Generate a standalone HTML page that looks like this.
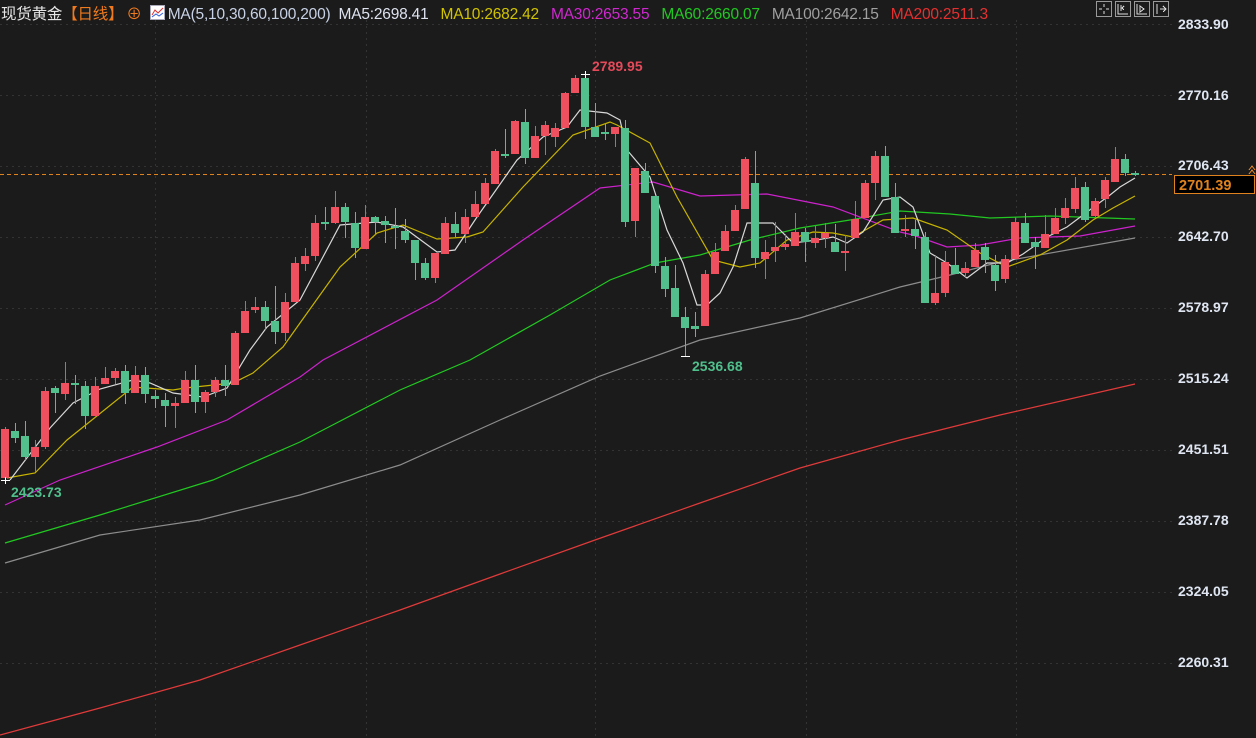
<!DOCTYPE html>
<html><head><meta charset="utf-8">
<style>
html,body{margin:0;padding:0;background:#1b1b1b;}
body{width:1256px;height:738px;overflow:hidden;position:relative;font-family:"Liberation Sans","Noto Sans CJK SC",sans-serif;}
svg{position:absolute;left:0;top:0}
.hd{position:absolute;left:1px;top:2px;font-size:15.5px;white-space:nowrap;color:#d8dce6;letter-spacing:-0.2px}
.hd span{margin-right:8px}
.ax{position:absolute;left:1178px;font-size:14px;color:#dfe6f2;font-weight:bold}
</style></head><body>
<svg width="1256" height="738" xmlns="http://www.w3.org/2000/svg">
<g stroke="#333" stroke-dasharray="2,4" stroke-width="1">
<line x1="0" y1="24.5" x2="1172" y2="24.5"/><line x1="0" y1="95.5" x2="1172" y2="95.5"/><line x1="0" y1="166.5" x2="1172" y2="166.5"/><line x1="0" y1="237.5" x2="1172" y2="237.5"/><line x1="0" y1="308.5" x2="1172" y2="308.5"/><line x1="0" y1="379.5" x2="1172" y2="379.5"/><line x1="0" y1="450.5" x2="1172" y2="450.5"/><line x1="0" y1="521.5" x2="1172" y2="521.5"/><line x1="0" y1="592.5" x2="1172" y2="592.5"/><line x1="0" y1="663.5" x2="1172" y2="663.5"/>
<line x1="155.5" y1="20" x2="155.5" y2="738"/><line x1="366.5" y1="20" x2="366.5" y2="738"/><line x1="595.5" y1="20" x2="595.5" y2="738"/><line x1="806.5" y1="20" x2="806.5" y2="738"/><line x1="1016.5" y1="20" x2="1016.5" y2="738"/>
</g>
<line x1="0" y1="174.5" x2="1172" y2="174.5" stroke="#e0821e" stroke-dasharray="4,3" stroke-width="1"/>
<g fill="none" stroke-width="1.2">
<polyline stroke="#e03a3a" points="0,735 100,708 200,680 300,645 400,610 500,574 595,540 700,503 800,468 900,440 1000,415 1135,384"/>
<polyline stroke="#8c8c8c" points="5,563 100,535 200,520 300,495 400,465 500,420 600,376 700,340 800,318 900,287 950,275 1000,262 1135,238"/>
<polyline stroke="#22c822" points="5,543 100,515 213,480 300,442 400,390 470,360 550,315 610,280 655,263 700,255 750,240 800,228 850,220 900,211 950,214 990,218 1050,216 1135,219"/>
<polyline stroke="#cc22cc" points="5,505 60,480 157,447 227,420 300,377 323,360 437,300 523,240 600,188 653,182 700,196 767,194 833,207 900,232 913,235 947,247 980,245 1020,238 1080,236 1135,226"/>
<polyline stroke="#c8b400" points="7,478 35,473 67,440 133,387 173,390 185,388 233,383 253,373 283,347 300,323 340,267 377,233 403,225 437,239 467,237 483,232 523,187 573,135 610,122 617,125 650,143 677,197 713,260 740,267 760,263 787,240 813,232 833,233 853,237 883,220 913,218 947,230 980,253 1007,267 1040,255 1067,240 1093,220 1113,208 1135,196"/>
<polyline stroke="#d8d8d8" points="10,480 33,450 50,428 73,403 100,389 133,380 150,383 173,393 203,397 227,388 250,350 267,327 300,300 340,225 377,222 403,227 437,252 455,250 477,217 503,180 517,160 543,137 567,127 580,110 607,113 620,120 627,150 650,177 667,230 683,263 697,305 707,305 720,293 733,267 747,223 773,223 793,243 817,240 833,237 847,243 863,232 883,200 900,197 913,207 930,253 947,263 967,278 987,263 1007,263 1023,254 1047,237 1067,227 1087,212 1110,195 1120,187 1135,178"/>
</g>
<g shape-rendering="crispEdges">
<g stroke="#ef5060" fill="#ef5060" stroke-width="1">
<line x1="5.5" y1="427" x2="5.5" y2="480"/><rect x="1" y="429" width="8" height="49" stroke="none"/>
<line x1="35.5" y1="440" x2="35.5" y2="472"/><rect x="31" y="447" width="8" height="10" stroke="none"/>
<line x1="45.5" y1="387" x2="45.5" y2="449"/><rect x="41" y="391" width="8" height="56" stroke="none"/>
<line x1="65.5" y1="362" x2="65.5" y2="400"/><rect x="61" y="383" width="8" height="11" stroke="none"/>
<line x1="95.5" y1="377" x2="95.5" y2="416"/><rect x="91" y="386" width="8" height="30" stroke="none"/>
<line x1="105.5" y1="367" x2="105.5" y2="384"/><rect x="101" y="378" width="8" height="6" stroke="none"/>
<line x1="115.5" y1="368" x2="115.5" y2="384"/><rect x="111" y="371" width="8" height="7" stroke="none"/>
<line x1="135.5" y1="366" x2="135.5" y2="393"/><rect x="131" y="375" width="8" height="18" stroke="none"/>
<line x1="175.5" y1="397" x2="175.5" y2="428"/><rect x="171" y="403" width="8" height="3" stroke="none"/>
<line x1="185.5" y1="371" x2="185.5" y2="403"/><rect x="181" y="380" width="8" height="23" stroke="none"/>
<line x1="205.5" y1="390" x2="205.5" y2="413"/><rect x="201" y="392" width="8" height="10" stroke="none"/>
<line x1="215.5" y1="377" x2="215.5" y2="397"/><rect x="211" y="380" width="8" height="12" stroke="none"/>
<line x1="235.5" y1="331" x2="235.5" y2="385"/><rect x="231" y="333" width="8" height="52" stroke="none"/>
<line x1="245.5" y1="301" x2="245.5" y2="333"/><rect x="241" y="311" width="8" height="22" stroke="none"/>
<line x1="255.5" y1="297" x2="255.5" y2="313"/><rect x="251" y="307" width="8" height="3" stroke="none"/>
<line x1="285.5" y1="293" x2="285.5" y2="341"/><rect x="281" y="302" width="8" height="31" stroke="none"/>
<line x1="295.5" y1="257" x2="295.5" y2="302"/><rect x="291" y="263" width="8" height="39" stroke="none"/>
<line x1="305.5" y1="248" x2="305.5" y2="271"/><rect x="301" y="256" width="8" height="8" stroke="none"/>
<line x1="315.5" y1="215" x2="315.5" y2="261"/><rect x="311" y="223" width="8" height="33" stroke="none"/>
<line x1="335.5" y1="191" x2="335.5" y2="224"/><rect x="331" y="207" width="8" height="16" stroke="none"/>
<line x1="365.5" y1="205" x2="365.5" y2="249"/><rect x="361" y="217" width="8" height="32" stroke="none"/>
<line x1="435.5" y1="253" x2="435.5" y2="283"/><rect x="431" y="253" width="8" height="25" stroke="none"/>
<line x1="445.5" y1="217" x2="445.5" y2="254"/><rect x="441" y="223" width="8" height="31" stroke="none"/>
<line x1="465.5" y1="209" x2="465.5" y2="243"/><rect x="461" y="217" width="8" height="17" stroke="none"/>
<line x1="475.5" y1="191" x2="475.5" y2="217"/><rect x="471" y="204" width="8" height="13" stroke="none"/>
<line x1="485.5" y1="178" x2="485.5" y2="204"/><rect x="481" y="183" width="8" height="21" stroke="none"/>
<line x1="495.5" y1="149" x2="495.5" y2="184"/><rect x="491" y="151" width="8" height="33" stroke="none"/>
<line x1="515.5" y1="120" x2="515.5" y2="154"/><rect x="511" y="121" width="8" height="33" stroke="none"/>
<line x1="535.5" y1="126" x2="535.5" y2="158"/><rect x="531" y="136" width="8" height="22" stroke="none"/>
<line x1="545.5" y1="121" x2="545.5" y2="155"/><rect x="541" y="125" width="8" height="11" stroke="none"/>
<line x1="555.5" y1="123" x2="555.5" y2="147"/><rect x="551" y="128" width="8" height="9" stroke="none"/>
<line x1="565.5" y1="92" x2="565.5" y2="128"/><rect x="561" y="93" width="8" height="35" stroke="none"/>
<line x1="575.5" y1="75" x2="575.5" y2="93"/><rect x="571" y="78" width="8" height="15" stroke="none"/>
<line x1="615.5" y1="127" x2="615.5" y2="147"/><rect x="611" y="127" width="8" height="7" stroke="none"/>
<line x1="635.5" y1="168" x2="635.5" y2="237"/><rect x="631" y="168" width="8" height="53" stroke="none"/>
<line x1="705.5" y1="270" x2="705.5" y2="326"/><rect x="701" y="274" width="8" height="52" stroke="none"/>
<line x1="715.5" y1="243" x2="715.5" y2="274"/><rect x="711" y="252" width="8" height="22" stroke="none"/>
<line x1="725.5" y1="225" x2="725.5" y2="251"/><rect x="721" y="231" width="8" height="20" stroke="none"/>
<line x1="735.5" y1="205" x2="735.5" y2="231"/><rect x="731" y="210" width="8" height="21" stroke="none"/>
<line x1="745.5" y1="157" x2="745.5" y2="209"/><rect x="741" y="159" width="8" height="50" stroke="none"/>
<line x1="765.5" y1="240" x2="765.5" y2="279"/><rect x="761" y="252" width="8" height="7" stroke="none"/>
<line x1="775.5" y1="222" x2="775.5" y2="262"/><rect x="771" y="247" width="8" height="4" stroke="none"/>
<line x1="785.5" y1="234" x2="785.5" y2="250"/><rect x="781" y="244" width="8" height="3" stroke="none"/>
<line x1="795.5" y1="213" x2="795.5" y2="246"/><rect x="791" y="232" width="8" height="14" stroke="none"/>
<line x1="815.5" y1="225" x2="815.5" y2="248"/><rect x="811" y="238" width="8" height="5" stroke="none"/>
<line x1="825.5" y1="223" x2="825.5" y2="248"/><rect x="821" y="233" width="8" height="5" stroke="none"/>
<line x1="845.5" y1="235" x2="845.5" y2="271"/><rect x="841" y="251" width="8" height="2" stroke="none"/>
<line x1="855.5" y1="201" x2="855.5" y2="238"/><rect x="851" y="219" width="8" height="19" stroke="none"/>
<line x1="865.5" y1="180" x2="865.5" y2="218"/><rect x="861" y="183" width="8" height="35" stroke="none"/>
<line x1="875.5" y1="151" x2="875.5" y2="200"/><rect x="871" y="156" width="8" height="27" stroke="none"/>
<line x1="905.5" y1="215" x2="905.5" y2="237"/><rect x="901" y="229" width="8" height="2" stroke="none"/>
<line x1="935.5" y1="255" x2="935.5" y2="305"/><rect x="931" y="293" width="8" height="10" stroke="none"/>
<line x1="945.5" y1="251" x2="945.5" y2="297"/><rect x="941" y="262" width="8" height="31" stroke="none"/>
<line x1="965.5" y1="262" x2="965.5" y2="277"/><rect x="961" y="268" width="8" height="5" stroke="none"/>
<line x1="975.5" y1="243" x2="975.5" y2="267"/><rect x="971" y="250" width="8" height="17" stroke="none"/>
<line x1="1005.5" y1="255" x2="1005.5" y2="283"/><rect x="1001" y="259" width="8" height="20" stroke="none"/>
<line x1="1015.5" y1="217" x2="1015.5" y2="259"/><rect x="1011" y="222" width="8" height="37" stroke="none"/>
<line x1="1045.5" y1="215" x2="1045.5" y2="248"/><rect x="1041" y="234" width="8" height="14" stroke="none"/>
<line x1="1055.5" y1="208" x2="1055.5" y2="234"/><rect x="1051" y="218" width="8" height="16" stroke="none"/>
<line x1="1065.5" y1="198" x2="1065.5" y2="224"/><rect x="1061" y="208" width="8" height="10" stroke="none"/>
<line x1="1075.5" y1="177" x2="1075.5" y2="213"/><rect x="1071" y="188" width="8" height="21" stroke="none"/>
<line x1="1095.5" y1="198" x2="1095.5" y2="218"/><rect x="1091" y="201" width="8" height="15" stroke="none"/>
<line x1="1105.5" y1="177" x2="1105.5" y2="208"/><rect x="1101" y="180" width="8" height="19" stroke="none"/>
<line x1="1115.5" y1="147" x2="1115.5" y2="182"/><rect x="1111" y="159" width="8" height="23" stroke="none"/>
</g>
<g stroke="#52bf8c" fill="#52bf8c" stroke-width="1">
<line x1="15.5" y1="423" x2="15.5" y2="443"/><rect x="11" y="431" width="8" height="7" stroke="none"/>
<line x1="25.5" y1="421" x2="25.5" y2="460"/><rect x="21" y="436" width="8" height="21" stroke="none"/>
<line x1="55.5" y1="386" x2="55.5" y2="413"/><rect x="51" y="388" width="8" height="5" stroke="none"/>
<line x1="75.5" y1="375" x2="75.5" y2="404"/><rect x="71" y="383" width="8" height="2" stroke="none"/>
<line x1="85.5" y1="381" x2="85.5" y2="429"/><rect x="81" y="386" width="8" height="30" stroke="none"/>
<line x1="125.5" y1="365" x2="125.5" y2="404"/><rect x="121" y="371" width="8" height="22" stroke="none"/>
<line x1="145.5" y1="367" x2="145.5" y2="403"/><rect x="141" y="375" width="8" height="19" stroke="none"/>
<line x1="155.5" y1="390" x2="155.5" y2="408"/><rect x="151" y="396" width="8" height="3" stroke="none"/>
<line x1="165.5" y1="393" x2="165.5" y2="427"/><rect x="161" y="400" width="8" height="6" stroke="none"/>
<line x1="195.5" y1="365" x2="195.5" y2="413"/><rect x="191" y="380" width="8" height="22" stroke="none"/>
<line x1="225.5" y1="365" x2="225.5" y2="396"/><rect x="221" y="380" width="8" height="6" stroke="none"/>
<line x1="265.5" y1="301" x2="265.5" y2="330"/><rect x="261" y="307" width="8" height="14" stroke="none"/>
<line x1="275.5" y1="286" x2="275.5" y2="344"/><rect x="271" y="321" width="8" height="11" stroke="none"/>
<line x1="325.5" y1="207" x2="325.5" y2="230"/><rect x="321" y="222" width="8" height="2" stroke="none"/>
<line x1="345.5" y1="203" x2="345.5" y2="238"/><rect x="341" y="207" width="8" height="15" stroke="none"/>
<line x1="355.5" y1="212" x2="355.5" y2="258"/><rect x="351" y="223" width="8" height="25" stroke="none"/>
<line x1="375.5" y1="216" x2="375.5" y2="235"/><rect x="371" y="217" width="8" height="5" stroke="none"/>
<line x1="385.5" y1="216" x2="385.5" y2="243"/><rect x="381" y="221" width="8" height="4" stroke="none"/>
<line x1="395.5" y1="208" x2="395.5" y2="249"/><rect x="391" y="226" width="8" height="2" stroke="none"/>
<line x1="405.5" y1="219" x2="405.5" y2="243"/><rect x="401" y="231" width="8" height="9" stroke="none"/>
<line x1="415.5" y1="240" x2="415.5" y2="280"/><rect x="411" y="240" width="8" height="23" stroke="none"/>
<line x1="425.5" y1="258" x2="425.5" y2="280"/><rect x="421" y="263" width="8" height="15" stroke="none"/>
<line x1="455.5" y1="212" x2="455.5" y2="237"/><rect x="451" y="224" width="8" height="9" stroke="none"/>
<line x1="505.5" y1="129" x2="505.5" y2="158"/><rect x="501" y="154" width="8" height="2" stroke="none"/>
<line x1="525.5" y1="109" x2="525.5" y2="164"/><rect x="521" y="122" width="8" height="36" stroke="none"/>
<line x1="585.5" y1="74" x2="585.5" y2="139"/><rect x="581" y="78" width="8" height="49" stroke="none"/>
<line x1="595.5" y1="103" x2="595.5" y2="137"/><rect x="591" y="127" width="8" height="10" stroke="none"/>
<line x1="605.5" y1="123" x2="605.5" y2="140"/><rect x="601" y="132" width="8" height="2" stroke="none"/>
<line x1="625.5" y1="120" x2="625.5" y2="227"/><rect x="621" y="128" width="8" height="94" stroke="none"/>
<line x1="645.5" y1="163" x2="645.5" y2="193"/><rect x="641" y="171" width="8" height="22" stroke="none"/>
<line x1="655.5" y1="196" x2="655.5" y2="273"/><rect x="651" y="196" width="8" height="70" stroke="none"/>
<line x1="665.5" y1="257" x2="665.5" y2="297"/><rect x="661" y="266" width="8" height="23" stroke="none"/>
<line x1="675.5" y1="265" x2="675.5" y2="317"/><rect x="671" y="288" width="8" height="29" stroke="none"/>
<line x1="685.5" y1="307" x2="685.5" y2="357"/><rect x="681" y="317" width="8" height="11" stroke="none"/>
<line x1="695.5" y1="312" x2="695.5" y2="337"/><rect x="691" y="326" width="8" height="3" stroke="none"/>
<line x1="755.5" y1="151" x2="755.5" y2="268"/><rect x="751" y="183" width="8" height="75" stroke="none"/>
<line x1="805.5" y1="228" x2="805.5" y2="262"/><rect x="801" y="232" width="8" height="10" stroke="none"/>
<line x1="835.5" y1="224" x2="835.5" y2="252"/><rect x="831" y="242" width="8" height="10" stroke="none"/>
<line x1="885.5" y1="146" x2="885.5" y2="197"/><rect x="881" y="156" width="8" height="41" stroke="none"/>
<line x1="895.5" y1="183" x2="895.5" y2="233"/><rect x="891" y="197" width="8" height="36" stroke="none"/>
<line x1="915.5" y1="220" x2="915.5" y2="249"/><rect x="911" y="229" width="8" height="7" stroke="none"/>
<line x1="925.5" y1="232" x2="925.5" y2="303"/><rect x="921" y="237" width="8" height="66" stroke="none"/>
<line x1="955.5" y1="248" x2="955.5" y2="274"/><rect x="951" y="265" width="8" height="9" stroke="none"/>
<line x1="985.5" y1="243" x2="985.5" y2="273"/><rect x="981" y="247" width="8" height="13" stroke="none"/>
<line x1="995.5" y1="255" x2="995.5" y2="291"/><rect x="991" y="265" width="8" height="16" stroke="none"/>
<line x1="1025.5" y1="213" x2="1025.5" y2="243"/><rect x="1021" y="223" width="8" height="20" stroke="none"/>
<line x1="1035.5" y1="237" x2="1035.5" y2="269"/><rect x="1031" y="242" width="8" height="5" stroke="none"/>
<line x1="1085.5" y1="182" x2="1085.5" y2="222"/><rect x="1081" y="187" width="8" height="33" stroke="none"/>
<line x1="1125.5" y1="154" x2="1125.5" y2="176"/><rect x="1121" y="159" width="8" height="14" stroke="none"/>
<line x1="1135.5" y1="171" x2="1135.5" y2="176"/><rect x="1131" y="173" width="8" height="2" stroke="none"/>
</g>
<g stroke="#ffffff" stroke-width="1">
<line x1="581" y1="74.5" x2="590" y2="74.5"/><line x1="585.5" y1="71" x2="585.5" y2="78"/>
<line x1="681" y1="356.5" x2="690" y2="356.5"/>
<line x1="1" y1="480.5" x2="10" y2="480.5"/><line x1="5.5" y1="477" x2="5.5" y2="484"/>
</g>
<rect x="1174.5" y="175.5" width="80" height="18" fill="#000" stroke="#e0821e"/>
<g stroke="#9a9a9a" fill="none">
<rect x="1096.5" y="1.5" width="15" height="15"/><rect x="1115.5" y="1.5" width="15" height="15"/><rect x="1134.5" y="1.5" width="15" height="15"/><rect x="1153.5" y="1.5" width="15" height="15"/>
</g>
<g stroke="#dcdcdc" fill="none">
<path d="M1104 4v3M1104 11v3M1099 9h3M1106 9h3"/>
<path d="M1118 4v10h10M1121 5v6M1124 6l-2 2 2 2"/>
<path d="M1137 4v10h10M1140 6l4 3-4 3z"/>
<path d="M1157 4v10M1160 9h6M1163 6l3 3-3 3"/>
</g>
<path d="M1249 170l3-4 3 4M1249 174l3-4 3 4" stroke="#e0821e" fill="none"/>
</g>
<text x="592" y="71" font-family="Liberation Sans" font-size="14" font-weight="bold" fill="#e64a5a">2789.95</text>
<text x="692" y="371" font-family="Liberation Sans" font-size="14" font-weight="bold" fill="#4fbf8c">2536.68</text>
<text x="11" y="497" font-family="Liberation Sans" font-size="14" font-weight="bold" fill="#4fbf8c">2423.73</text>
<text x="1179" y="190" font-family="Liberation Sans" font-size="14.5" font-weight="bold" fill="#e0821e">2701.39</text>
</svg>
<div class="hd"><span style="color:#e6e6e6;margin-right:0">现货黄金</span><span style="color:#f07a1e;margin-right:3px">【日线】</span><span style="color:#f07a1e">⊕</span><span style="display:inline-block;width:13px;height:13px;border:1px solid #aab;background:#fff;vertical-align:-1px;margin-right:3px;position:relative"><svg width="13" height="13" style="position:absolute;left:0;top:0"><path d="M1 9l3-5 3 3 5-5" stroke="#e03030" fill="none"/><path d="M1 11l4-3 3 2 4-3" stroke="#3060e0" fill="none"/></svg></span><span style="color:#c8d2e6">MA(5,10,30,60,100,200)</span><span style="color:#dde2ee;margin-right:12px">MA5:2698.41</span><span style="color:#d2c400;margin-right:12px">MA10:2682.42</span><span style="color:#d028d0;margin-right:12px">MA30:2653.55</span><span style="color:#22c822;margin-right:12px">MA60:2660.07</span><span style="color:#a0a0a0;margin-right:12px">MA100:2642.15</span><span style="color:#e63030">MA200:2511.3</span></div>
<div class="ax" style="top:16px">2833.90</div>
<div class="ax" style="top:87px">2770.16</div>
<div class="ax" style="top:157px">2706.43</div>
<div class="ax" style="top:228px">2642.70</div>
<div class="ax" style="top:299px">2578.97</div>
<div class="ax" style="top:370px">2515.24</div>
<div class="ax" style="top:441px">2451.51</div>
<div class="ax" style="top:512px">2387.78</div>
<div class="ax" style="top:583px">2324.05</div>
<div class="ax" style="top:654px">2260.31</div>
</body></html>
